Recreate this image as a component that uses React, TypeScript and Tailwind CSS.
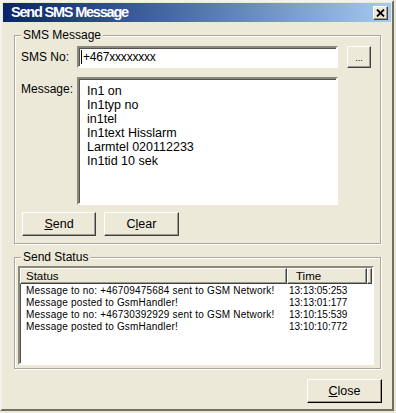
import React from 'react';

const raised =
  'border border-t-white border-l-white border-r-[#404040] border-b-[#404040] shadow-[inset_-1px_-1px_0_#9d9b90] bg-[#ece9d8]';
const sunken =
  'border-2 border-t-[#8a887d] border-l-[#8a887d] border-r-white border-b-white shadow-[inset_1px_1px_0_#55534b] bg-white';

const messageLines = ['In1 on', 'In1typ no', 'in1tel', 'In1text Hisslarm', 'Larmtel 020112233', 'In1tid 10 sek'];

const statusRows = [
  { text: 'Message to no: +46709475684 sent to GSM Network!', time: '13:13:05:253' },
  { text: 'Message posted to GsmHandler!', time: '13:13:01:177' },
  { text: 'Message to no: +46730392929 sent to GSM Network!', time: '13:10:15:539' },
  { text: 'Message posted to GsmHandler!', time: '13:10:10:772' },
];

const GroupBox = ({ title, className, children }: { title: string; className: string; children: React.ReactNode }) => (
  <div className={`relative border border-[#aca899] shadow-[inset_1px_1px_0_#fff,1px_1px_0_#fff] ${className}`}>
    {/* caption sits over the top line */}
    <span className="absolute left-[6px] top-[-8px] bg-[#ece9d8] px-[2px] text-[12px] leading-[14px] text-black">
      {title}
    </span>
    {children}
  </div>
);

const App = () => {
  return (
    <div className="w-[396px] h-[413px] bg-[#ece9d8] font-['Liberation_Sans',Arial,sans-serif] text-black">
      <div className="w-[394px] h-[411px] flex flex-col border-2 border-t-[#f3f2ec] border-l-[#f3f2ec] border-r-[#716f64] border-b-[#716f64] p-[1px]">
        {/* Title bar */}
        <div className="h-[19px] flex items-center justify-between bg-gradient-to-r from-[#0a246a] to-[#a6caf0] pl-[8px] pr-[3px]">
          <span className="text-white font-bold text-[14.5px] tracking-[-1.2px] leading-none">Send SMS Message</span>
          <div className={`w-[15px] h-[14px] flex items-center justify-center ${raised}`}>
            <svg width="9" height="8" viewBox="0 0 9 8">
              <path d="M1 0.5 L8 7.5 M8 0.5 L1 7.5" stroke="#000" strokeWidth="1.8" />
            </svg>
          </div>
        </div>

        {/* Body */}
        <div className="flex-1 flex flex-col pl-[11px] pr-[10px]">
          <GroupBox title="SMS Message" className="mt-[13px] h-[209px] pl-[6px] pt-[10px]">
            <div className="flex items-center">
              <span className="w-[56px] text-[12px]">SMS No:</span>
              <div className={`w-[261px] h-[22px] flex items-center pl-[2px] ${sunken}`}>
                <span className="w-[1px] h-[14px] bg-black mr-[1px]" />
                <span className="text-[12px] tracking-[-0.2px]">+467xxxxxxxx</span>
              </div>
              <div className={`ml-[9px] w-[24px] h-[22px] flex items-center justify-center pt-[3px] text-[9px] ${raised}`}>...</div>
            </div>
            <div className="flex mt-[9px]">
              <span className="w-[56px] text-[12px] pt-[3px]">Message:</span>
              <div className={`w-[261px] h-[128px] pl-[8px] pt-[5px] ${sunken}`}>
                {messageLines.map((l, i) => (
                  <div key={i} className="text-[12.5px] leading-[14px]">{l}</div>
                ))}
              </div>
            </div>
            <div className="flex gap-[8px] mt-[7px] ml-[1px]">
              <div className={`w-[74px] h-[24px] flex items-center justify-center text-[12.5px] ${raised}`}>
                <span><span className="underline">S</span>end</span>
              </div>
              <div className={`w-[75px] h-[24px] flex items-center justify-center text-[12.5px] ${raised}`}>
                <span>C<span className="underline">l</span>ear</span>
              </div>
            </div>
          </GroupBox>

          <GroupBox title="Send Status" className="mt-[13px] h-[112px] pl-[3px] pr-[6px] pt-[8px]">
            <div className={`h-[99px] flex flex-col ${sunken}`}>
              <div className="h-[16px] flex text-[11.5px] leading-[14px]">
                <div className={`w-[267px] pl-[5px] ${raised}`}>Status</div>
                <div className={`w-[80px] pl-[8px] ${raised}`}>Time</div>
                <div className={`flex-1 ${raised}`} />
              </div>
              <div className="pt-[1px]">
                {statusRows.map((r, i) => (
                  <div key={i} className="flex h-[11.75px] items-center text-[10px] tracking-[0.2px]">
                    <span className="w-[267px] pl-[6px] whitespace-nowrap">{r.text}</span>
                    <span className="pl-[2px] tracking-[0px]">{r.time}</span>
                  </div>
                ))}
              </div>
            </div>
          </GroupBox>

          <div className="flex justify-end mt-[10px] mr-[-1px]">
            <div className={`w-[75px] h-[24px] flex items-center justify-center text-[12.5px] border-b-black border-r-black ${raised}`}>
              <span><span className="underline">C</span>lose</span>
            </div>
          </div>
        </div>
      </div>
    </div>
  );
};

export default App;
